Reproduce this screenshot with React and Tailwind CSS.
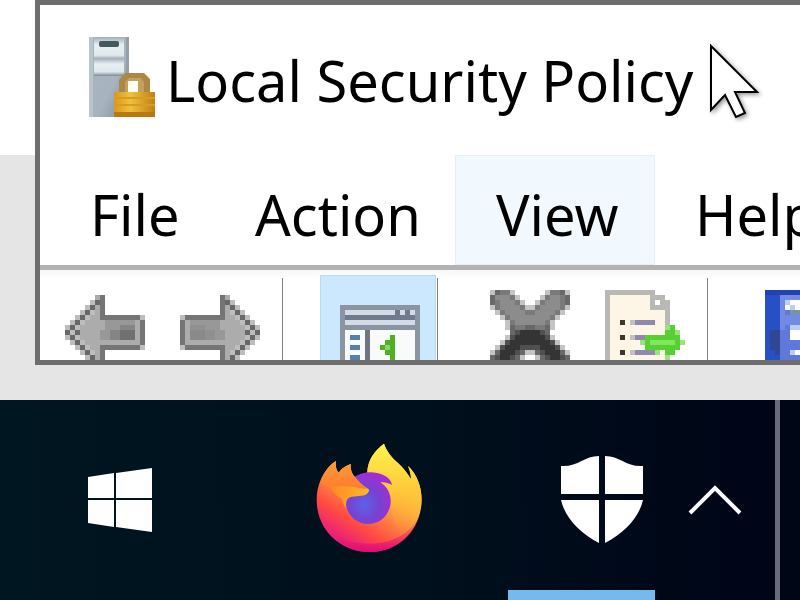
const ARROW = {
  palette: { l: "#bdbdbd", d: "#686868", e: "#757575", m: "#acacac", n: "#989898", k: "#858585", j: "#707070" },
  rows: [
    "......me........",
    ".....lde........",
    "....ldme........",
    "...ldlme........",
    "..ldlmmeeeeeeeel",
    ".ldlmmmmnnnnnnme",
    "ldlmmmmmnnnkkkme",
    "dldmmmmnnkkjjjme",
    "ldlmmmmnnkkjjjme",
    ".ldlmmmmmmmmmmme",
    "..ldlmmeeeeeeeel",
    "...ldlme........",
    "....ldme........",
  ],
};

const ARROW_RIGHT = {
  palette: { ...ARROW.palette, k: "#909090", j: "#8a8a8a" },
  rows: ARROW.rows.map((row) => row.split("").reverse().join("")),
};

const TREE = {
  palette: { a: "#8b95a1", b: "#d3dbe8", c: "#6f7b8c", w: "#f9fbfb", k: "#6d7682", u: "#5580ad", g: "#4fb021", h: "#86d66a" },
  rows: [
    "aaaaaaaaaaaaaaaa",
    "abbbbbbbbbbcbcba",
    "acccccccccccccca",
    "abbbbbbbbbbbbbba",
    "aaaaaaaaaaaaaaaa",
    "awwwwkwwwwwwwwwa",
    "awuuwkwwwwgwwwwa",
    "awwwwkwwwggwwwwa",
    "awuuwkwwghgwwwwa",
    "awwwwkwwwggwwwwa",
    "awuuwkwwwwgwwwwa",
  ],
};

const CROSS = {
  palette: { a: "#c4c4c4", b: "#8c8c8c", f: "#7a7a7a", c: "#686868", d: "#505050", e: "#343434" },
  rows: [
    "acffa......affca",
    "cbbbfa....afbbfc",
    "cfbbbfa..afbbbfc",
    "afbbbbfaafbbbbfa",
    ".afbbbbffbbbbfa.",
    "..afbbbbbbbbfa..",
    "...afbbbbbbfa...",
    "...acffccffca...",
    "....cdeeeedc....",
    "...adeeeeeeda...",
    "..adeeeeeeeeda..",
    ".adeeeddddeeeda.",
    "aceeedcaacdeeeca",
    "cdeedca..acdeedc",
  ],
};

const EXPORT = {
  palette: { g: "#b9b8b5", y: "#fdf6e6", w: "#ffffff", k: "#3d352f", q: "#c3c0c4", p: "#9089ad", n: "#58cf34", m: "#7fe85e", t: "#9ae27f" },
  rows: [
    "gggggggggg......",
    "gyyyyyyyyggg....",
    "gyyyyyyyygwgg...",
    "gyyyyyyyygggg...",
    "gyyyyyyyyyyyg...",
    "gyyyyyyyyyyyg...",
    "gyykyqppppyyg...",
    "gyyyyyyyyyyytn..",
    "gyyyyyyyyyyynnt.",
    "gyykyqppnnnnnnn.",
    "gyyyyyytnmmmmmnt",
    "gyyyyyyynnnnnnn.",
    "gyykyqpppptynn..",
    "gyyyyyyyyyyyt...",
  ],
};

const BOOK = {
  palette: { n: "#2043b0", b: "#2750c4", d: "#304796", l: "#7289e6", m: "#6078dc", p: "#b8cef6", w: "#ffffff", s: "#7694a8" },
  rows: [
    "nnnnnnn",
    "bbbllll",
    "bbblpww",
    "bbblwpw",
    "bbblmss",
    "bbbllll",
    "bbbllll",
    "bbblmpp",
    "bddmmww",
    "bddmmww",
    "bddmmmm",
    "bddmmmm",
    "bbdmmpw",
    "bbbmmmm",
  ],
};

function Sprite({ art, className = "" }) {
  const cols = art.rows[0].length;
  return (
    <svg
      width={cols * 5}
      height={art.rows.length * 5}
      viewBox={`0 0 ${cols} ${art.rows.length}`}
      shapeRendering="crispEdges"
      className={`block shrink-0 ${className}`}
      aria-hidden="true"
    >
      {art.rows.map((row, y) =>
        row.split("").map((c, x) =>
          c === "." ? null : <rect key={`${x}-${y}`} x={x} y={y} width="1" height="1" fill={art.palette[c]} />
        )
      )}
    </svg>
  );
}

function ServerLockIcon() {
  return (
    <svg width="68" height="80" viewBox="0 0 68 80" className="block shrink-0" aria-hidden="true">
      <defs>
        <linearGradient id="tower" x1="0" y1="0" x2="1" y2="1">
          <stop offset="0" stopColor="#a9b5be" />
          <stop offset="0.6" stopColor="#a7b3be" />
          <stop offset="1" stopColor="#7d8891" />
        </linearGradient>
        <linearGradient id="bay" x1="0" y1="0" x2="0" y2="1">
          <stop offset="0" stopColor="#a9b6be" />
          <stop offset="0.3" stopColor="#e8eff2" />
          <stop offset="0.75" stopColor="#dfe8ec" />
          <stop offset="1" stopColor="#7b8790" />
        </linearGradient>
        <linearGradient id="brass" x1="0" y1="0" x2="1" y2="0">
          <stop offset="0" stopColor="#d9981a" />
          <stop offset="0.4" stopColor="#f0c040" />
          <stop offset="1" stopColor="#bf8113" />
        </linearGradient>
      </defs>
      <rect x="1" width="40" height="80" fill="url(#tower)" />
      <rect x="1" width="4" height="80" fill="#bac4cb" />
      <rect x="38" width="3" height="36" fill="#93a0a9" />
      <rect x="6" y="1" width="30" height="23" fill="url(#bay)" />
      <rect x="11" y="4" width="20" height="6" rx="2" fill="#43585f" />
      <rect x="6" y="22" width="30" height="17" fill="url(#bay)" />
      <path d="M31 56V43L37 36H56L62 42V56Z" fill="#ae8742" />
      <path d="M37 55V45L41 41H53L56 45V55Z" fill="#c2a05f" />
      <rect x="40" y="44" width="10" height="11" fill="#fffdf5" />
      <rect x="26" y="55" width="41" height="25" fill="url(#brass)" />
      <path d="M26 61H67M26 68H67" stroke="#d89d20" strokeWidth="2" />
      <rect x="26" y="75" width="41" height="5" fill="#b9770f" />
    </svg>
  );
}

function FirefoxIcon() {
  return (
    <svg width="106" height="110" viewBox="48 40 318 330" className="block" aria-hidden="true">
      <defs>
        <linearGradient id="fire" x1="300" y1="70" x2="120" y2="350" gradientUnits="userSpaceOnUse">
          <stop offset="0.05" stopColor="#fff44f" />
          <stop offset="0.3" stopColor="#ffc83a" />
          <stop offset="0.5" stopColor="#ff9640" />
          <stop offset="0.75" stopColor="#ff4b42" />
          <stop offset="1" stopColor="#e31587" />
        </linearGradient>
        <linearGradient id="flame" x1="0" y1="0" x2="0" y2="1">
          <stop offset="0" stopColor="#fff34e" />
          <stop offset="0.5" stopColor="#ffcb3a" />
          <stop offset="1" stopColor="#ff983c" stopOpacity="0" />
        </linearGradient>
        <linearGradient id="base" x1="0" y1="0" x2="0" y2="1">
          <stop offset="0" stopColor="#ff4055" stopOpacity="0" />
          <stop offset="1" stopColor="#e00b78" />
        </linearGradient>
        <radialGradient id="globe" cx="0.4" cy="0.62" r="0.65">
          <stop offset="0" stopColor="#5d61e8" />
          <stop offset="0.5" stopColor="#7542d2" />
          <stop offset="1" stopColor="#a72bd4" />
        </radialGradient>
        <linearGradient id="face" x1="0" y1="0" x2="1" y2="0">
          <stop offset="0" stopColor="#ff8a22" />
          <stop offset="1" stopColor="#ffb72c" />
        </linearGradient>
        <linearGradient id="ear" x1="0" y1="0" x2="0" y2="1">
          <stop offset="0" stopColor="#ff9a3a" />
          <stop offset="1" stopColor="#ff7d2c" />
        </linearGradient>
      </defs>
      <path
        d="M108 94C106 108 108 120 116 129C126 115 137 108 152 103C151 119 155 133 165 142L202 130C202 92 224 63 252 42C260 66 275 83 293 99C309 114 322 130 333 149C333 134 329 120 324 109C349 130 365 172 365 210C365 297 296 367 209 367C120 367 50 300 50 211C50 168 68 120 108 94Z"
        fill="url(#fire)"
      />
      <path
        d="M202 130C202 92 224 63 252 42C260 66 275 83 293 99C309 114 322 130 333 149C333 134 329 120 324 109C353 136 368 178 364 222C358 260 338 290 305 306C280 290 274 250 273 200Z"
        fill="url(#flame)"
      />
      <path d="M60 260C96 330 156 342 212 342C278 342 335 310 360 253C343 323 281 367 209 367C139 367 79 324 60 260Z" fill="url(#base)" />
      <path
        d="M163 142C180 130 207 125 231 130C256 135 273 148 276 166C264 159 253 157 241 158C261 171 273 191 272 217C270 254 242 283 205 283C166 283 137 252 137 215Z"
        fill="url(#globe)"
      />
      <path
        d="M92 173C118 168 144 165 165 143C174 153 188 170 204 177C211 181 205 188 200 193C188 202 167 197 150 203C136 209 138 226 139 236C128 226 130 211 121 203C109 199 98 187 92 173Z"
        fill="url(#face)"
      />
      <path
        d="M108 94C106 108 108 120 116 129C126 115 137 108 152 103C151 119 155 133 165 142C177 158 190 170 204 178C174 176 142 164 92 173C78 172 68 165 64 158C70 130 88 104 108 94Z"
        fill="url(#ear)"
      />
    </svg>
  );
}

function Cursor() {
  return (
    <svg
      width="60"
      height="84"
      viewBox="0 0 60 84"
      className="pointer-events-none absolute left-[705px] top-[40px] drop-shadow-[2px_2px_2px_rgba(0,0,0,0.4)]"
      aria-hidden="true"
    >
      <path d="M6 6V70L20 55L31 77L40 73L30 52H52Z" fill="#fff" stroke="#000" strokeWidth="2" />
    </svg>
  );
}

function Separator() {
  return <div className="mt-2 h-[85px] w-px shrink-0 bg-[#808080]" />;
}

function SecurityWindow() {
  return (
    <section className="min-w-0 flex-1 overflow-hidden border-y-5 border-l-5 border-[#6d6d6d] bg-white">
      <header className="flex h-[150px] items-start gap-[10px] pl-12 pt-8">
        <ServerLockIcon />
        <h1 className="whitespace-nowrap text-[56px] leading-[86px]">Local Security Policy</h1>
      </header>

      <nav className="flex h-[110px] text-[56px]">
        <button className="w-[175px] shrink-0 pl-[50px] pt-2 text-left">File</button>
        <button className="w-[240px] shrink-0 pl-10 pt-2 text-left">Action</button>
        <button className="w-[200px] shrink-0 border border-[#e3f0fb] bg-[#f1f8fe] pl-10 pt-2 text-left">View</button>
        <button className="shrink-0 px-10 pt-2 text-left">Help</button>
      </nav>

      <div className="flex h-[95px] items-start overflow-hidden border-t-5 border-[#b2b2b2] bg-linear-to-b from-[#f7f7f7] to-white to-10%">
        <button aria-label="Back" className="shrink-0 pl-[25px] pt-[25px]">
          <Sprite art={ARROW} />
        </button>
        <button aria-label="Forward" className="shrink-0 pl-[35px] pr-[22px] pt-[25px]">
          <Sprite art={ARROW_RIGHT} />
        </button>
        <Separator />
        <button
          aria-label="Show or hide console tree"
          className="ml-[37px] mt-[5px] w-[116px] shrink-0 border border-b-0 border-[#b5dbf5] bg-[#cce8ff] pt-[29px] pb-5"
        >
          <Sprite art={TREE} className="ml-[19px]" />
        </button>
        <div className="pl-px">
          <Separator />
        </div>
        <button aria-label="Delete" className="shrink-0 pl-[52px] pt-5">
          <Sprite art={CROSS} />
        </button>
        <button aria-label="Export list" className="shrink-0 pl-[35px] pr-[22px] pt-5">
          <Sprite art={EXPORT} />
        </button>
        <Separator />
        <button aria-label="Help topics" className="shrink-0 pl-[57px] pt-5">
          <Sprite art={BOOK} />
        </button>
      </div>
    </section>
  );
}

function Taskbar() {
  return (
    <footer className="flex h-[200px] bg-linear-to-r from-[#001620] via-[#00101d] to-[#000516]">
      <button aria-label="Start" className="flex w-[240px] shrink-0 items-center justify-center">
        <svg width="64" height="64" viewBox="0 0 64 64" fill="#fff" aria-hidden="true">
          <path d="M0 9L26 5V30H0ZM28 5L64 0V30H28ZM0 32H26V59L0 55ZM28 32H64V64L28 59Z" />
        </svg>
      </button>
      <button aria-label="Firefox" className="flex w-[258px] shrink-0 items-center justify-center pb-1">
        <FirefoxIcon />
      </button>
      <button
        aria-label="Windows Security"
        className="ml-[10px] flex w-[147px] shrink-0 items-center border-b-10 border-[#76b9ed] pl-[52px] pt-[10px]"
      >
        <svg width="84" height="88" viewBox="0 0 84 88" fill="#fff" className="shrink-0" aria-hidden="true">
          <path d="M39 0V38H1V10C18 11 24 0 39 0ZM45 0C60 0 66 11 83 10V38H45ZM1 44H39V87C20 77 5 62 1 44ZM45 44H83C79 62 64 77 45 87Z" />
        </svg>
      </button>
      <button aria-label="Show hidden icons" className="flex w-[120px] shrink-0 items-center justify-center">
        <svg width="54" height="30" viewBox="0 0 54 30" fill="none" stroke="#fff" strokeWidth="4" aria-hidden="true">
          <path d="M2 28L27 3L52 28" />
        </svg>
      </button>
      <button aria-label="Show desktop" className="flex-1 border-l-5 border-[#686c7a]" />
    </footer>
  );
}

export default function App() {
  return (
    <main className="relative overflow-hidden bg-[#e5e5e5] font-['Noto_Sans','Open_Sans',sans-serif] text-black">
      <div className="flex items-start pb-[35px]">
        <div className="h-[155px] w-[35px] shrink-0 bg-white" />
        <SecurityWindow />
      </div>
      <Taskbar />
      <Cursor />
    </main>
  );
}
